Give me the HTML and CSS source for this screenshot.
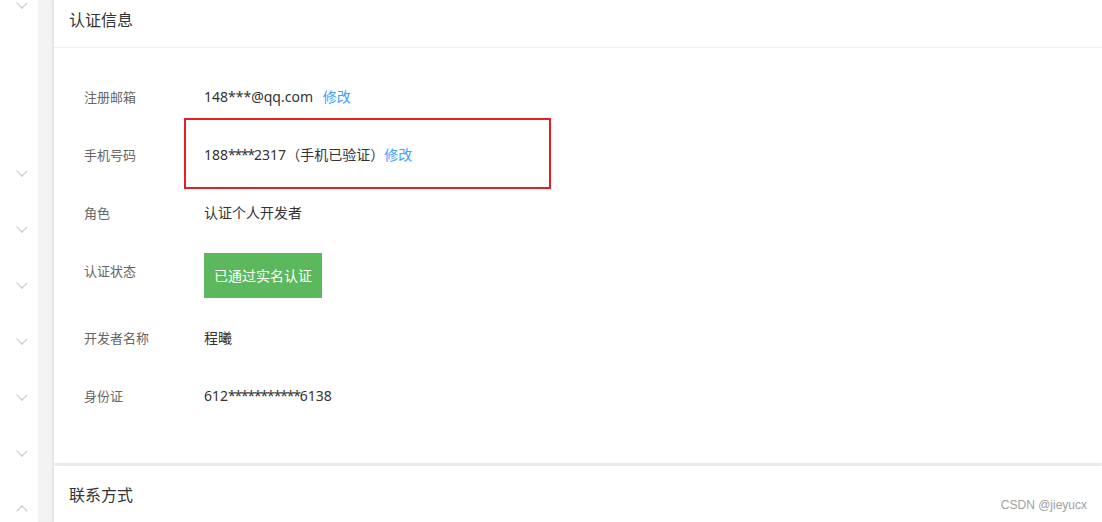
FILE: index.html
```html
<!DOCTYPE html>
<html lang="zh-CN">
<head>
    <meta charset="UTF-8">
    <title>账号信息</title>
    <link rel="stylesheet" href="styles.css">
</head>
<body>
    <div class="layout">
        <div class="side-menu">
            <div class="menu-item"><span class="chevron"></span></div>
            <div class="menu-item"></div>
            <div class="menu-item"></div>
            <div class="menu-item"><span class="chevron"></span></div>
            <div class="menu-item"><span class="chevron"></span></div>
            <div class="menu-item"><span class="chevron"></span></div>
            <div class="menu-item"><span class="chevron"></span></div>
            <div class="menu-item"><span class="chevron"></span></div>
            <div class="menu-item"><span class="chevron"></span></div>
            <div class="menu-item"><span class="chevron up"></span></div>
        </div>
        <div class="gutter"></div>

        <div class="main">
            <div class="card">
                <div class="card-header">认证信息</div>
                <div class="card-body">
                    <div class="info-row">
                        <div class="info-label">注册邮箱</div>
                        <div class="info-value">148***@qq.com <a class="edit-link spaced" href="#">修改</a></div>
                    </div>
                    <div class="info-row">
                        <div class="info-label">手机号码</div>
                        <div class="info-value marked">188<span class="mask">****</span>2317（手机已验证）<a class="edit-link" href="#">修改</a></div>
                    </div>
                    <div class="info-row">
                        <div class="info-label">角色</div>
                        <div class="info-value">认证个人开发者</div>
                    </div>
                    <div class="info-row">
                        <div class="info-label">认证状态</div>
                        <div class="info-value"><span class="status-badge">已通过实名认证</span></div>
                    </div>
                    <div class="info-row">
                        <div class="info-label">开发者名称</div>
                        <div class="info-value">程曦</div>
                    </div>
                    <div class="info-row">
                        <div class="info-label">身份证</div>
                        <div class="info-value">612<span class="mask">***********</span>6138</div>
                    </div>
                </div>
            </div>

            <div class="card contact">
                <div class="card-header">联系方式</div>
            </div>
        </div>
    </div>

    <div class="watermark">CSDN @jieyucx</div>
</body>
</html>
```

FILE: styles.css
```css
body {
    margin: 0;
    background-color: #fff;
    font-family: 'Noto Sans', 'Noto Sans CJK SC', sans-serif;
    color: #333;
    overflow: hidden;
}

.layout {
    display: flex;
    height: 522px;
}

.side-menu {
    width: 38px;
    flex-shrink: 0;
    margin-top: -23px;
    display: flex;
    flex-direction: column;
}

.menu-item {
    height: 56px;
    flex-shrink: 0;
    display: flex;
    align-items: center;
    justify-content: center;
    padding-left: 6px;
}

.chevron {
    width: 7px;
    height: 7px;
    border-right: 1px solid #c0c4cc;
    border-bottom: 1px solid #c0c4cc;
    transform: translateY(-2px) rotate(45deg);
}

.chevron.up {
    transform: translateY(2px) rotate(-135deg);
}

.gutter {
    width: 16px;
    flex-shrink: 0;
    background-color: #f3f3f3;
    box-shadow: inset -3px 0 4px -2px rgba(0,0,0,0.06);
}

.main {
    flex: 1;
    display: flex;
    flex-direction: column;
    gap: 3px;
    background-color: #f3f3f3;
}

.card {
    background-color: #fff;
    box-shadow: 0 0 4px rgba(0,0,0,0.08);
}

.card-header {
    height: 48px;
    line-height: 41px;
    padding-left: 15px;
    font-size: 16px;
    color: #333;
    border-bottom: 1px solid #f0f0f0;
    box-sizing: border-box;
}

.contact {
    flex: 1;
}

.contact .card-header {
    padding-top: 9px;
    border-bottom: none;
}

.card-body {
    padding: 20px 0 38px 30px;
}

.info-row {
    display: flex;
    align-items: flex-start;
    padding: 19px 0;
    position: relative;
}

.info-label {
    width: 120px;
    font-size: 13px;
    line-height: 20px;
    color: #666;
}

.info-value {
    font-size: 14px;
    line-height: 20px;
    color: #333;
}

.mask {
    letter-spacing: -1.2px;
}

.edit-link {
    color: #409eff;
    text-decoration: none;
}

.edit-link.spaced {
    margin-left: 6px;
}

.marked::after {
    content: '';
    position: absolute;
    left: 100px;
    top: -8px;
    width: 363px;
    height: 67px;
    border: 2px solid #e81c24;
}

.status-badge {
    display: block;
    margin: -8px 0;
    height: 45px;
    line-height: 45px;
    padding: 0 10px;
    background-color: #5cb85c;
    color: #fff;
}

.watermark {
    position: absolute;
    right: 15px;
    bottom: 10px;
    font-family: 'Liberation Sans', Arial, sans-serif;
    font-size: 12px;
    color: #a0a0a0;
}
```
